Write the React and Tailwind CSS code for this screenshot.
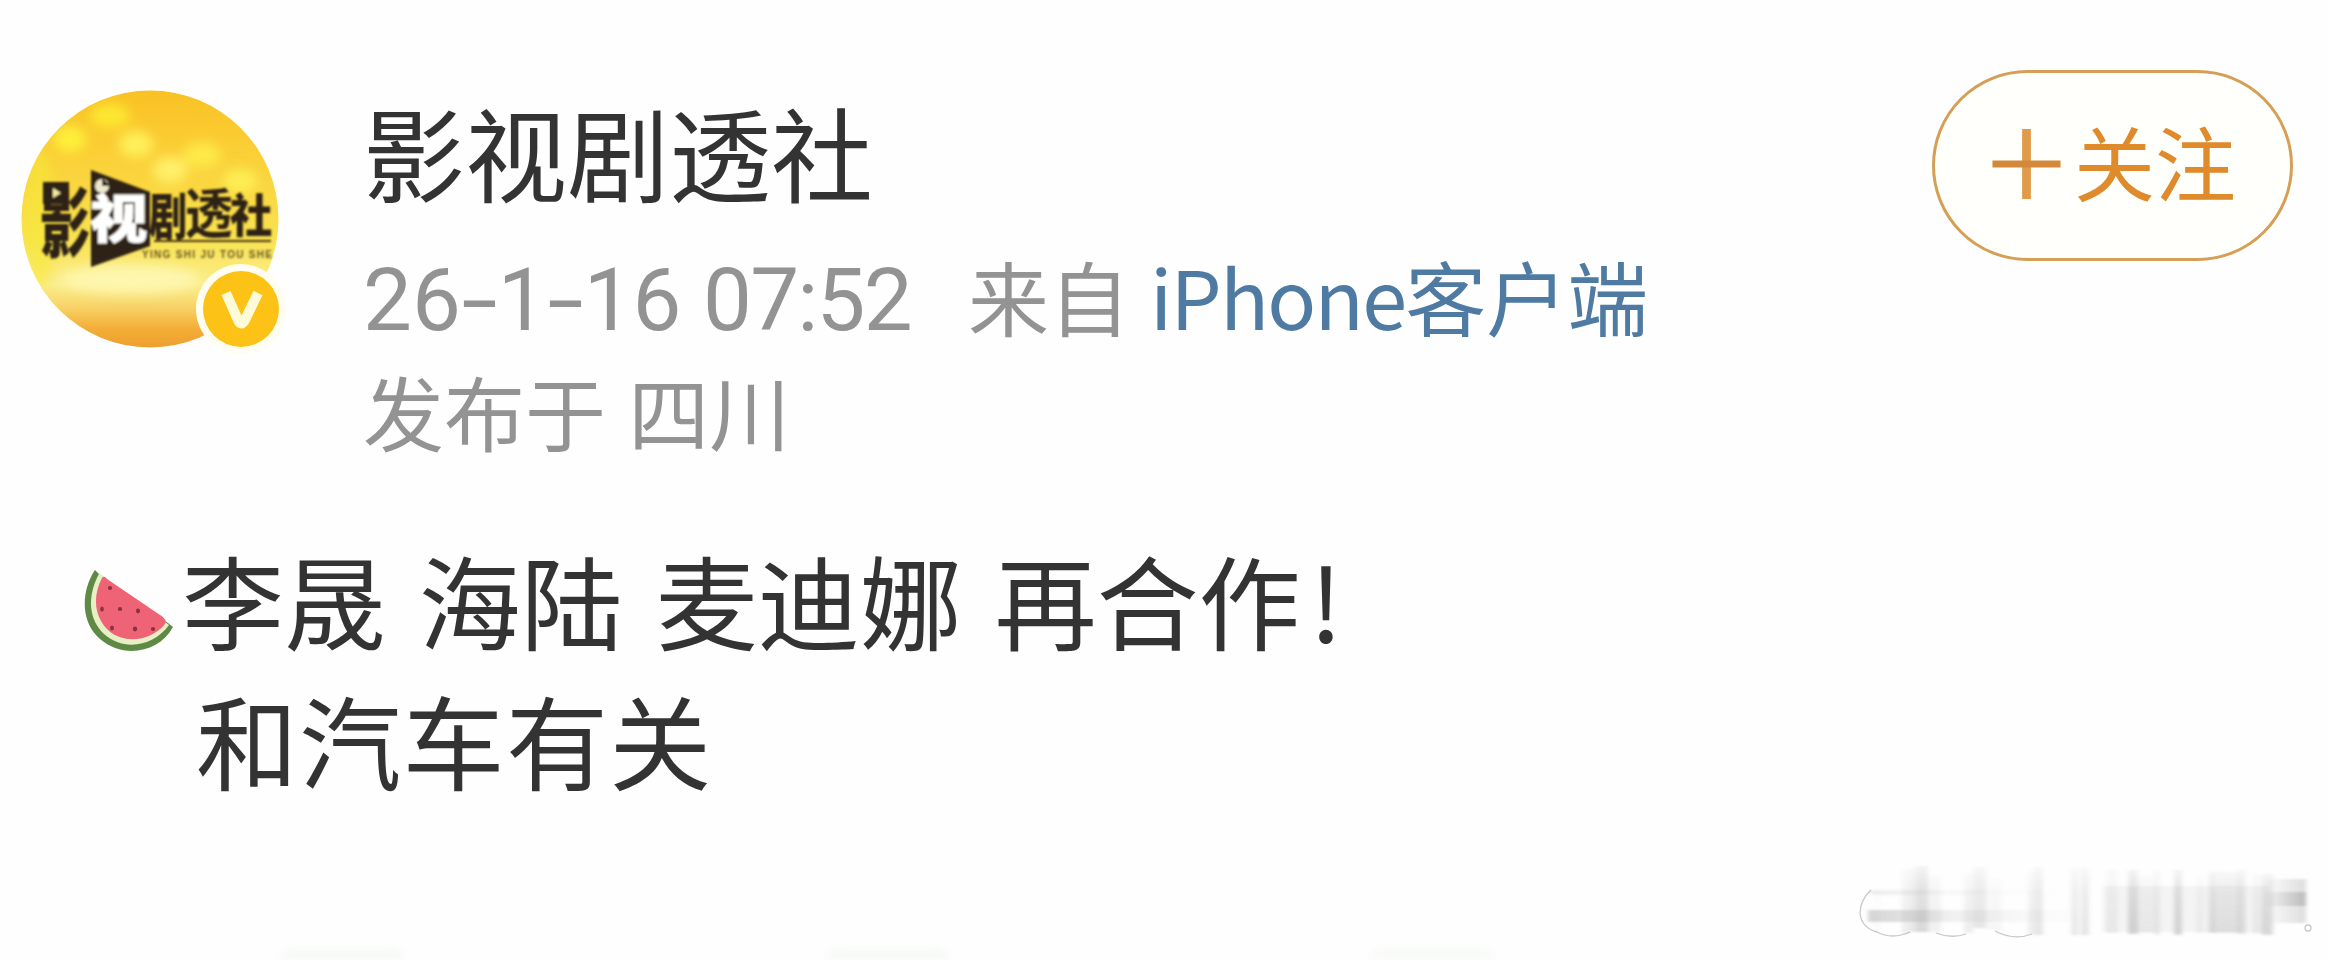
const stripes = [
  // x, width, top, bottom, opacity
  [47, 5, 52, 92, 0.03],
  [74, 8, 30, 94, 0.12],
  [82, 6, 28, 92, 0.18],
  [88, 12, 26, 92, 0.28],
  [100, 13, 36, 92, 0.1],
  [136, 9, 34, 93, 0.12],
  [145, 13, 27, 88, 0.18],
  [158, 16, 38, 90, 0.06],
  [200, 6, 32, 94, 0.12],
  [206, 9, 27, 95, 0.18],
  [243, 8, 28, 95, 0.15],
  [253, 8, 28, 95, 0.18],
  [278, 12, 30, 93, 0.1],
  [300, 10, 30, 94, 0.3],
  [310, 16, 36, 93, 0.1],
  [326, 6, 30, 95, 0.14],
  [346, 8, 30, 95, 0.28],
  [368, 8, 36, 93, 0.08],
  [380, 32, 32, 93, 0.18],
  [383, 4, 30, 93, 0.1],
  [410, 8, 30, 94, 0.2],
  [424, 10, 34, 94, 0.1],
  [434, 11, 34, 95, 0.26],
];

function Melon() {
  return (
    <svg className="h-[86px] w-[94px] shrink-0" viewBox="0 0 94 86">
      <path d="M13 3C0 22-3 54 18 72C41 92 77 86 91 60L86 56L19 9Z" fill="#5f8a45" />
      <path d="M17 7C7 25 4 50 22 67C42 85 72 79 87 58L20 8Z" fill="#e9efc4" />
      <path d="M20 11C11 28 11 49 27 64C44 78 70 73 83 57Q85 54 81 50L25 12Q22 8 20 11Z" fill="#ee6476" />
      <g fill="#8d3040">
        <ellipse cx="28" cy="21" rx="2.2" ry="2" />
        <ellipse cx="20" cy="42" rx="1.8" ry="2.6" />
        <ellipse cx="38" cy="42" rx="2.2" ry="2" />
        <ellipse cx="56" cy="44" rx="2" ry="2.4" />
        <ellipse cx="30" cy="61" rx="2" ry="2.6" />
        <ellipse cx="53" cy="62" rx="2.2" ry="2.4" />
        <ellipse cx="71" cy="62" rx="2.2" ry="2" />
      </g>
    </svg>
  );
}

function Avatar() {
  return (
    <svg className="h-[272px] w-[272px] shrink-0" viewBox="0 0 272 272">
      <defs>
        <linearGradient id="sun" x1="0" y1="0" x2="0" y2="1">
          <stop offset="0" stopColor="#f9c123" />
          <stop offset="0.25" stopColor="#fbd038" />
          <stop offset="0.55" stopColor="#f9e250" />
          <stop offset="0.72" stopColor="#fbee8d" />
          <stop offset="0.8" stopColor="#f8d368" />
          <stop offset="0.88" stopColor="#f3ae38" />
          <stop offset="0.96" stopColor="#ee9d2c" />
        </linearGradient>
        <filter id="glow" x="-50%" y="-50%" width="200%" height="200%">
          <feGaussianBlur stdDeviation="6" />
        </filter>
        <filter id="soft">
          <feGaussianBlur stdDeviation="0.9" />
        </filter>
        <clipPath id="disc">
          <circle cx="130" cy="130" r="128.5" />
        </clipPath>
      </defs>
      <g clipPath="url(#disc)">
        <rect width="272" height="272" fill="url(#sun)" />
        <g filter="url(#glow)">
          <ellipse cx="50" cy="50" rx="16" ry="13" fill="#fdf03a" />
          <ellipse cx="90" cy="27" rx="20" ry="12" fill="#fde732" />
          <ellipse cx="116" cy="55" rx="17" ry="13" fill="#fff05a" />
          <ellipse cx="150" cy="81" rx="17" ry="13" fill="#fff06a" />
          <ellipse cx="182" cy="66" rx="19" ry="13" fill="#fde94a" />
          <ellipse cx="220" cy="92" rx="17" ry="12" fill="#fdee55" />
          <ellipse cx="20" cy="130" rx="14" ry="70" fill="#f5ea35" opacity="0.6" />
          <ellipse cx="110" cy="190" rx="70" ry="14" fill="#fdf6ae" />
        </g>
      </g>
      <g filter="url(#soft)" fontFamily="'Noto Sans CJK SC', sans-serif" fontWeight="900">
        <path d="M71 81L130 103V157L71 178Z" fill="#2e2416" />
        <circle cx="82" cy="97" r="7" fill="#eee8cf" />
        <path d="M82 97V89L91 97Z" fill="#2e2416" />
        <text transform="translate(20 162) scale(0.66 1)" fontSize="76" fill="#2e2416">影</text>
        <rect x="23" y="93" width="26" height="22" fill="#2e2416" />
        <path d="M33 99L41 104L33 109Z" fill="#f6e9a0" />
        <text transform="translate(70 149) scale(1.1 1)" fontSize="52" fill="#fff" stroke="#fff" strokeWidth="1">视</text>
        <text transform="translate(129 146) scale(0.76 1)" fontSize="50" fill="#2e2416">剧</text>
        <text transform="translate(165 144) scale(0.9 1)" fontSize="53" fontWeight="700" fill="#2e2416">透</text>
        <text transform="translate(210 143) scale(0.92 1)" fontSize="46" fill="#2e2416">社</text>
        <path d="M134 152H251" stroke="#4a3a18" strokeWidth="2" />
        <text x="122" y="169" fontSize="10" fontWeight="700" fontFamily="'Liberation Sans', sans-serif" fill="#6a5824" textLength="130">YING SHI JU TOU SHE</text>
      </g>
      <circle cx="221" cy="220" r="45" fill="#fffdf0" />
      <circle cx="221" cy="220" r="38" fill="#fcc215" />
      <path d="M206 204L218 231Q221 238 225 231L238 204" fill="none" stroke="#fffbd8" strokeWidth="10" />
    </svg>
  );
}

function Watermark() {
  return (
    <svg className="h-[120px] w-[500px]" viewBox="0 0 500 120">
      <defs>
        <linearGradient id="fade" x1="0" y1="0" x2="0" y2="1">
          <stop offset="0" stopColor="#777" stopOpacity="0.25" />
          <stop offset="0.35" stopColor="#777" stopOpacity="0.7" />
          <stop offset="1" stopColor="#777" stopOpacity="1" />
        </linearGradient>
        <linearGradient id="tail" x1="0" y1="0" x2="1" y2="0">
          <stop offset="0" stopColor="#777" stopOpacity="0.04" />
          <stop offset="1" stopColor="#777" stopOpacity="0.34" />
        </linearGradient>
        <linearGradient id="band" x1="0" y1="0" x2="1" y2="0">
          <stop offset="0" stopColor="#777" stopOpacity="0.3" />
          <stop offset="0.4" stopColor="#777" stopOpacity="0.1" />
          <stop offset="1" stopColor="#777" stopOpacity="0" />
        </linearGradient>
        <filter id="smear">
          <feGaussianBlur stdDeviation="2 1" />
        </filter>
      </defs>
      <g filter="url(#smear)">
        <rect x="40" y="70" width="210" height="12" fill="url(#band)" />
        <rect x="42" y="50" width="190" height="5" fill="url(#band)" opacity="0.4" />
        <rect x="275" y="46" width="165" height="46" fill="#777" opacity="0.07" />
        {stripes.map(([x, w, top, bottom, opacity]) => (
          <rect key={x} x={x} y={top} width={w} height={bottom - top} fill="url(#fade)" opacity={opacity} />
        ))}
        <rect x="440" y="39" width="38" height="44" fill="url(#tail)" opacity="0.7" />
        <rect x="440" y="52" width="38" height="14" fill="url(#tail)" />
      </g>
      <g fill="none" stroke="#777" strokeOpacity="0.4" strokeWidth="1.300">
        <path d="M43 50Q32 60 32 74Q34 88 49 92Q64 100 82 92" />
        <path d="M108 93Q123 99 138 94" />
        <path d="M167 91Q186 101 204 94" />
        <circle cx="480" cy="88" r="3" />
      </g>
    </svg>
  );
}

function Dash() {
  return <span className="inline-block w-[37px] scale-x-150 text-center">-</span>;
}

export default function App() {
  return (
    <div
      lang="zh-CN"
      className="relative flex h-[960px] w-[2328px] flex-col overflow-hidden bg-[#fefefe] font-['Noto_Sans_CJK_SC',sans-serif] text-[#333]"
    >
      <header className="flex h-[471px] items-start pt-[70px] pl-5">
        <div className="pt-[19px]">
          <Avatar />
        </div>

        <div className="flex flex-col pl-[71px]">
          <h1 className="h-[160px] text-[102px] leading-[162px] whitespace-nowrap">影视剧透社</h1>
          <div className="flex h-[130px] items-baseline text-[81px] leading-[130px] whitespace-nowrap text-[#939393]">
            <span className="w-[605px] font-['Roboto',sans-serif] text-[87px]">
              26
              <Dash />1<Dash />
              16 <span className="tracking-[-1.8px]">07:52</span>
            </span>
            <span className="w-[182px]">来自</span>
            <span className="text-[#4f7ba3]">
              <span className="tracking-[-1.8px]">iPhone</span>客户端
            </span>
          </div>
          <p className="h-[100px] text-[81px] leading-[100px] whitespace-nowrap text-[#939393] [word-spacing:4px]">发布于 四川</p>
        </div>

        <button className="mr-[35px] ml-auto flex h-[191px] w-[361px] items-center rounded-full border-[3px] border-[#d59f55] bg-[#fffffb] pb-[3px] pl-[56px] text-[81px] leading-none whitespace-nowrap text-[#df8a2b]">
          <svg className="mr-3 h-[70px] w-[71px] shrink-0" viewBox="0 0 72 72">
            <path d="M36 0V72" stroke="#e09a48" strokeWidth="9" />
            <path d="M1 36H71" stroke="#d4893a" strokeWidth="7" />
          </svg>
          <span className="pb-[9px]">关注</span>
        </button>
      </header>

      <main className="pt-[58px] pl-[82px] text-[102px] whitespace-nowrap">
        <div className="flex h-[140px] items-center">
          <div className="pt-[22px]">
            <Melon />
          </div>
          <p className="pl-[6px] leading-[140px] [word-spacing:10px]">
            李晟 海陆 麦迪娜 再合作<span className="pl-[9px]">!</span>
          </p>
        </div>
        <p className="h-[140px] pl-[114px] leading-[140px] tracking-[1.3px]">和汽车有关</p>
      </main>

      {/* tops of the action icons at the lower edge */}
      <div className="absolute bottom-0 left-[280px] flex gap-[420px] blur-[3px]">
        <span className="h-3 w-[125px] rounded-t-full bg-[#f8faf7]" />
        <span className="h-3 w-[125px] rounded-t-full bg-[#f8faf7]" />
        <span className="h-3 w-[125px] rounded-t-full bg-[#f9fbf7]" />
      </div>

      <div className="absolute right-0 bottom-0">
        <Watermark />
      </div>
    </div>
  );
}
